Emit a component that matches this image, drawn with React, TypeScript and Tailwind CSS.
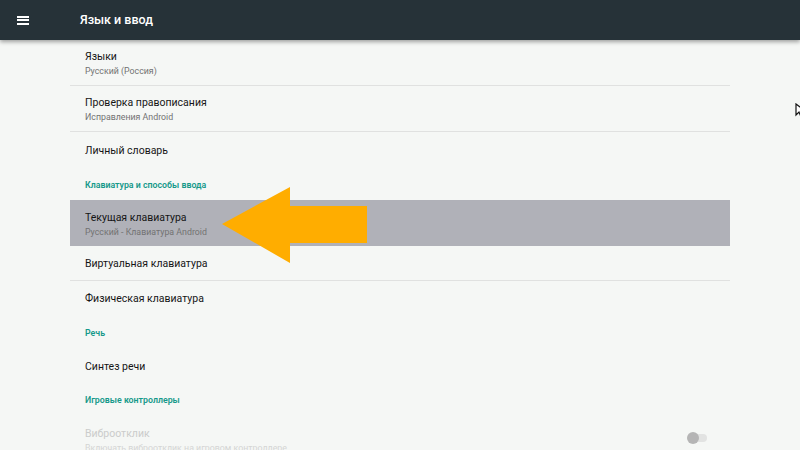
import React from 'react';

type Row =
  | { kind: 'item'; title: string; summary?: string; h: string; divider?: boolean; active?: boolean; disabled?: boolean; toggle?: boolean }
  | { kind: 'category'; title: string; h: string };

const rows: Row[] = [
  { kind: 'item', title: 'Языки', summary: 'Русский (Россия)', h: 'h-[46px]', divider: true },
  { kind: 'item', title: 'Проверка правописания', summary: 'Исправления Android', h: 'h-[46px]', divider: true },
  { kind: 'item', title: 'Личный словарь', h: 'h-[36px]' },
  { kind: 'category', title: 'Клавиатура и способы ввода', h: 'h-[32px]' },
  { kind: 'item', title: 'Текущая клавиатура', summary: 'Русский - Клавиатура Android', h: 'h-[46px]', active: true },
  { kind: 'item', title: 'Виртуальная клавиатура', h: 'h-[35px]', divider: true },
  { kind: 'item', title: 'Физическая клавиатура', h: 'h-[34px]' },
  { kind: 'category', title: 'Речь', h: 'h-[34px]' },
  { kind: 'item', title: 'Синтез речи', h: 'h-[33px]' },
  { kind: 'category', title: 'Игровые контроллеры', h: 'h-[34px]' },
  {
    kind: 'item',
    title: 'Виброотклик',
    summary: 'Включать виброотклик на игровом контроллере',
    h: 'h-[46px]',
    disabled: true,
    toggle: true,
  },
];

function PrefRow({ row }: { row: Row }) {
  if (row.kind === 'category') {
    return (
      <div className={`${row.h} flex items-center px-[15px] pt-[3px] text-[8.8px] font-semibold text-[#16998a]`}>
        {row.title}
      </div>
    );
  }
  return (
    <div
      className={`${row.h} flex shrink-0 items-center px-[15px] pt-[2px] ${row.active ? 'bg-[#b0b1b8]' : ''} ${
        row.divider ? 'border-b border-[#e0e1e0]' : ''
      }`}
    >
      <div className="flex min-w-0 flex-1 flex-col justify-center">
        <div className={`text-[10.5px] leading-[14px] ${row.disabled ? 'text-[#cbcccb]' : 'text-[#151515]'}`}>
          {row.title}
        </div>
        {row.summary && (
          <div className={`mt-[1px] text-[8.8px] leading-[12px] ${row.disabled ? 'text-[#d4d5d4]' : 'text-[#727272]'}`}>
            {row.summary}
          </div>
        )}
      </div>
      {row.toggle && (
        <div className="relative mr-[8px] mt-[-4px] h-[12px] w-[20px]">
          <div className="absolute left-[4px] top-[2px] h-[8px] w-[16px] rounded-full bg-[#e2e3e2]" />
          <div className="absolute left-0 top-0 h-[12px] w-[12px] rounded-full bg-[#b5b5b5]" />
        </div>
      )}
    </div>
  );
}

export default function App() {
  return (
    <div
      className="relative h-[450px] w-[800px] overflow-hidden bg-[#f5f7f5]"
      style={{ fontFamily: 'Roboto, "Noto Sans", sans-serif' }}
    >
      {/* Toolbar */}
      <header className="relative z-10 flex h-[40px] items-center bg-[#263238] shadow-[0_2px_4px_rgba(0,0,0,0.35)]">
        <div className="flex w-[80px] items-center pl-[17px]">
          <div className="flex w-[12px] flex-col gap-[1.5px]">
            <span className="h-[2px] bg-white" />
            <span className="h-[2px] bg-white" />
            <span className="h-[2px] bg-white" />
          </div>
        </div>
        <h1 className="text-[12.5px] font-medium text-white">Язык и ввод</h1>
      </header>

      {/* Preferences */}
      <main className="ml-[70px] flex w-[660px] flex-col">
        {rows.map((row) => (
          <PrefRow key={row.title} row={row} />
        ))}
      </main>

      {/* Annotation arrow */}
      <svg className="pointer-events-none absolute left-0 top-0" width="800" height="450">
        <polygon
          points="222,224 290,187 290,206 367,206 367,243 290,243 290,263"
          fill="#ffad00"
        />
      </svg>

      {/* Mouse cursor */}
      <svg className="pointer-events-none absolute left-[795px] top-[103px]" width="10" height="16">
        <path d="M1 1 L1 12 L4 9 L6 14 L8 13 L6 8 L10 8 Z" fill="#fff" stroke="#111" strokeWidth="1.2" />
      </svg>
    </div>
  );
}
